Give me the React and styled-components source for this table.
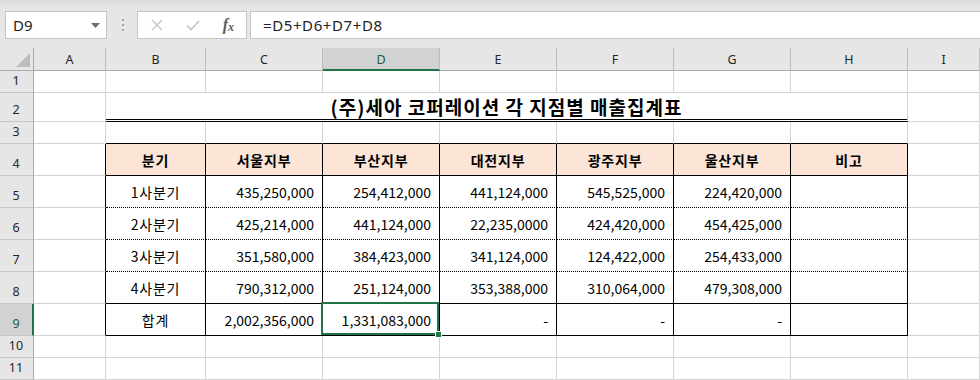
import React from "react";
import styled, { createGlobalStyle } from "styled-components";

const GRID = "1px solid #d4d4d4";
const BLACK = "1px solid #000";
const DOTTED = "1px dotted #000";
const GREEN = "#217346";

const COLS = ["A", "B", "C", "D", "E", "F", "G", "H", "I"];
const HEIGHTS = [22, 29, 22, 32, 32, 32, 32, 32, 32, 22, 22];

const HEADERS = ["분기", "서울지부", "부산지부", "대전지부", "광주지부", "울산지부", "비고"];
const BODY = [
  ["1사분기", "435,250,000", "254,412,000", "441,124,000", "545,525,000", "224,420,000", ""],
  ["2사분기", "425,214,000", "441,124,000", "22,235,0000", "424,420,000", "454,425,000", ""],
  ["3사분기", "351,580,000", "384,423,000", "341,124,000", "124,422,000", "254,433,000", ""],
  ["4사분기", "790,312,000", "251,124,000", "353,388,000", "310,064,000", "479,308,000", ""],
  ["합계", "2,002,356,000", "1,331,083,000", "-", "-", "-", ""],
];

const GlobalStyle = createGlobalStyle`
  html, body {
    margin: 0;
    padding: 0;
    background: #fff;
    overflow: hidden;
  }
  * { box-sizing: border-box; }
`;

export default function App() {
  return (
    <>
      <GlobalStyle />
      <Page>
        <FormulaBar>
          <NameBox>
            <span>D9</span>
            <svg width="9" height="5" viewBox="0 0 9 5">
              <path d="M0 0h9L4.5 5z" fill="#6f6f6f" />
            </svg>
          </NameBox>
          <Grip>
            <i />
            <i />
            <i />
          </Grip>
          <ActionBox>
            <svg width="12" height="12" viewBox="0 0 12 12">
              <path d="M1 1l10 10M11 1L1 11" stroke="#c4c4c4" strokeWidth="1.4" fill="none" />
            </svg>
            <svg width="14" height="11" viewBox="0 0 14 11">
              <path d="M1 5.5l4 4L13 1" stroke="#c4c4c4" strokeWidth="1.6" fill="none" />
            </svg>
            <Fx>
              f<sub>x</sub>
            </Fx>
          </ActionBox>
          <FormulaInput>=D5+D6+D7+D8</FormulaInput>
        </FormulaBar>
        <Sheet>
          <Corner>
            <svg width="14" height="14" viewBox="0 0 14 14">
              <path d="M14 0v14H0z" fill="#bdbdbd" />
            </svg>
          </Corner>
          {COLS.map((c) => (
            <ColHead key={c} $sel={c === "D"}>
              {c}
            </ColHead>
          ))}
          {HEIGHTS.map((_, i) => renderRow(i + 1))}
        </Sheet>
      </Page>
    </>
  );
}

function borders(r, c) {
  const inTable = r >= 4 && r <= 9;
  let right = GRID;
  let bottom = GRID;
  if (inTable && c >= 0 && c <= 7) right = BLACK;
  if (r === 3 && c >= 1 && c <= 7) bottom = BLACK;
  if (inTable && c >= 1 && c <= 7) {
    bottom = r >= 5 && r <= 7 ? DOTTED : BLACK;
  }
  return { right, bottom };
}

function renderRow(r) {
  const cells = [
    <RowHead key={`h${r}`} $sel={r === 9}>
      {r}
    </RowHead>,
  ];
  if (r === 2) {
    cells.push(<Cell key="a2" $right={GRID} $bottom={GRID} />);
    cells.push(
      <Title key="title">(주)세아 코퍼레이션 각 지점별 매출집계표</Title>
    );
    cells.push(<Cell key="i2" $right={GRID} $bottom={GRID} />);
    return cells;
  }
  COLS.forEach((_, c) => {
    const { right, bottom } = borders(r, c);
    let text = "";
    let head = false;
    if (r === 4 && c >= 1 && c <= 7) {
      text = HEADERS[c - 1];
      head = true;
    } else if (r >= 5 && r <= 9 && c >= 1 && c <= 7) {
      text = BODY[r - 5][c - 1];
    }
    const label = head || c === 1;
    cells.push(
      <Cell
        key={`${r}-${c}`}
        $right={right}
        $bottom={bottom}
        $head={head}
        $label={label}
        $active={r === 9 && c === 3}
      >
        {text}
        {r === 9 && c === 3 && (
          <Selection>
            <Handle />
          </Selection>
        )}
      </Cell>
    );
  });
  return cells;
}

const Page = styled.div`
  width: 980px;
  height: 380px;
  overflow: hidden;
  background: #fff;
`;

const FormulaBar = styled.div`
  display: flex;
  align-items: flex-start;
  height: 48px;
  padding: 11px 0 0 5px;
  background: linear-gradient(#d9d9d9, #e6e6e6 8px);
  font-family: "Noto Sans", "Open Sans", sans-serif;
  font-size: 15px;
  color: #222;
`;

const Box = styled.div`
  height: 28px;
  background: #fff;
  border: 1px solid #c6c6c6;
  display: flex;
  align-items: center;
`;

const NameBox = styled(Box)`
  width: 102px;
  padding: 0 6px 0 7px;
  justify-content: space-between;
`;

const Grip = styled.div`
  display: flex;
  flex-direction: column;
  gap: 3px;
  margin: 8px 13px 0 15px;
  i {
    width: 2px;
    height: 2px;
    background: #a6a6a6;
  }
`;

const ActionBox = styled(Box)`
  width: 110px;
  padding: 0 12px 0 13px;
  justify-content: space-between;
`;

const Fx = styled.span`
  font-family: "Liberation Serif", serif;
  font-style: italic;
  font-weight: bold;
  font-size: 16px;
  color: #5a5a5a;
  sub {
    font-size: 12px;
    vertical-align: -1px;
  }
`;

const FormulaInput = styled(Box)`
  flex: 1;
  margin: 0 -4px 0 3px;
  padding-left: 12px;
  letter-spacing: 0.6px;
`;

const Sheet = styled.div`
  display: grid;
  grid-template-columns: 34px 72px 100px repeat(6, 117px) 1fr;
  grid-template-rows: 23px ${HEIGHTS.map((h) => `${h}px`).join(" ")};
`;

const Corner = styled.div`
  background: #e6e6e6;
  border-right: 1px solid #ababab;
  border-bottom: 1px solid #ababab;
  display: flex;
  justify-content: flex-end;
  align-items: flex-end;
  padding: 0 3px 3px 0;
`;

const ColHead = styled.div`
  background: ${(p) => (p.$sel ? "#d2d2d2" : "#e6e6e6")};
  border-right: 1px solid #bcbcbc;
  border-bottom: ${(p) => (p.$sel ? `2px solid ${GREEN}` : "1px solid #ababab")};
  display: flex;
  align-items: center;
  justify-content: center;
  padding-top: ${(p) => (p.$sel ? "1px" : "0")};
  font-family: "Noto Sans", "Open Sans", sans-serif;
  font-size: 12.5px;
  color: ${(p) => (p.$sel ? "#1d5c38" : "#262626")};
`;

const RowHead = styled.div`
  background: ${(p) => (p.$sel ? "#d2d2d2" : "#e6e6e6")};
  border-right: ${(p) => (p.$sel ? `2px solid ${GREEN}` : "1px solid #ababab")};
  border-bottom: 1px solid #c6c6c6;
  display: flex;
  align-items: flex-end;
  justify-content: center;
  padding: 0 ${(p) => (p.$sel ? "0" : "1px")} 3px 0;
  font-family: "Noto Sans", "Open Sans", sans-serif;
  font-size: 12.5px;
  line-height: 16px;
  color: ${(p) => (p.$sel ? "#1d5c38" : "#262626")};
`;

const Cell = styled.div`
  position: ${(p) => (p.$active ? "relative" : "static")};
  border-right: ${(p) => p.$right};
  border-bottom: ${(p) => p.$bottom};
  background: ${(p) => (p.$head ? "#fce4d6" : "#fff")};
  display: flex;
  align-items: center;
  justify-content: ${(p) => (p.$label ? "center" : "flex-end")};
  padding: 0 ${(p) => (p.$label ? "0" : "8px")} 0 0;
  font-family: "Noto Sans CJK KR", "Noto Sans", sans-serif;
  font-size: 14px;
  font-weight: ${(p) => (p.$head ? 700 : 400)};
  letter-spacing: ${(p) => (p.$label ? "0.8px" : "0")};
  color: #000;
  white-space: nowrap;
`;

const Title = styled.div`
  grid-column: 3 / span 7;
  border-right: ${GRID};
  border-bottom: 3px double #000;
  display: flex;
  align-items: center;
  justify-content: center;
  font-family: "Noto Sans CJK KR", "Noto Sans", sans-serif;
  font-size: 19px;
  font-weight: 700;
  letter-spacing: 1px;
  color: #000;
  padding-top: 1px;
`;

const Selection = styled.div`
  position: absolute;
  left: -2px;
  top: -2px;
  right: 0;
  bottom: 0;
  border: 2px solid ${GREEN};
  pointer-events: none;
`;

const Handle = styled.div`
  position: absolute;
  right: -5px;
  bottom: -5px;
  width: 7px;
  height: 7px;
  background: ${GREEN};
  border: 1px solid #fff;
`;
